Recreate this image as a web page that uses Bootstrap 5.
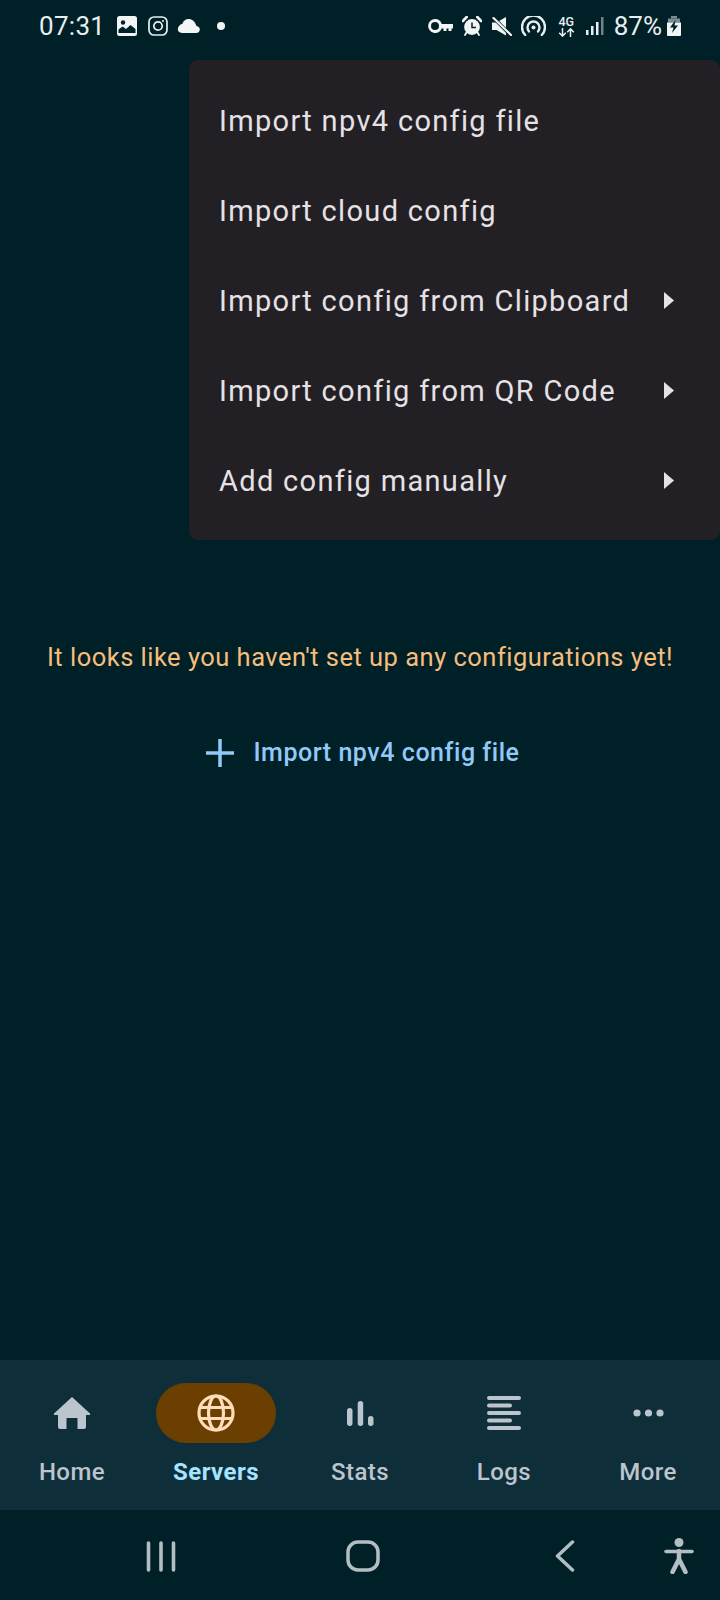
<!DOCTYPE html>
<html lang="en">
<head>
  <meta charset="UTF-8">
  <meta name="viewport" content="width=device-width, initial-scale=1.0">
  <title>Servers</title>
  <link href="https://cdn.jsdelivr.net/npm/bootstrap@5.3.0/dist/css/bootstrap.min.css" rel="stylesheet">
  <style>
    html, body {
      height: 100%;
      margin: 0;
      background-color: #002028;
      font-family: Roboto, "Liberation Sans", sans-serif;
    }

    .phone {
      width: 720px;
      height: 1600px;
      overflow: hidden;
    }

    /* Status bar */
    .status-bar {
      height: 54px;
      padding: 0 39px 2px 39px;
      color: #e8eef0;
      font-size: 26px;
    }
    .status-bar svg { display: block; flex: none; }
    .status-time { width: 78px; letter-spacing: .3px; }
    .status-pct { margin-left: 10px; line-height: 1; }
    .gap-9 { margin-left: 9px; }
    .gap-10 { margin-left: 10px; }
    .gap-11 { margin-left: 11px; }
    .gap-12 { margin-left: 12px; }
    .gap-17 { margin-left: 17px; }
    .gap-5 { margin-left: 5px; }
    .net-type { width: 17px; }
    .net-label {
      font-size: 12.5px;
      font-weight: 500;
      line-height: 11px;
      height: 11px;
    }

    /* Popup menu */
    .popup {
      position: absolute;
      top: 60px;
      left: 189px;
      width: 531px;
      padding: 15px 0;
      background-color: #222025;
      border-radius: 9px;
      color: #e6e1e5;
    }
    .popup-item {
      height: 90px;
      padding: 4px 46px 0 30px;
      font-size: 29px;
      letter-spacing: 1.32px;
    }
    .popup-item svg { margin-bottom: 3px; }

    /* Empty state */
    .empty-state { padding-top: 579px; }
    .empty-text {
      color: #f6bd7b;
      font-size: 25.5px;
      letter-spacing: .48px;
      line-height: 48px;
    }
    .empty-action {
      margin-top: 48px;
      margin-left: 6px;
      color: #93c9f8;
      font-size: 25px;
      font-weight: 500;
      letter-spacing: .55px;
      line-height: 48px;
      gap: 19px;
    }

    /* Bottom tabs */
    .tabbar {
      height: 150px;
      background-color: #0e2e39;
      color: #bcc4ce;
    }
    .tab-item { width: 144px; padding-top: 23px; }
    .tab-pill {
      width: 120px;
      height: 60px;
      border-radius: 30px;
    }
    .tab-item.is-active .tab-pill { background-color: #6b3f00; }
    .tab-item.is-active .tab-label { color: #a6e5ff; font-weight: 700; }
    .tab-label {
      margin-top: 11px;
      font-size: 24px;
      font-weight: 500;
      letter-spacing: .45px;
      line-height: 36px;
    }

    /* Android system buttons */
    .system-bar {
      height: 90px;
      padding: 2px 0 0 146px;
      color: #b3bec2;
    }
    .system-bar svg { display: block; flex: none; }
    .sys-home { margin-left: 170px; }
    .sys-back { margin-left: 175px; }
    .sys-access { margin-left: 89px; }
  </style>
</head>
<body>
  <div class="phone position-relative d-flex flex-column">

    <div class="status-bar d-flex align-items-center">
      <span class="status-time">07:31</span>
      <!-- gallery -->
      <svg width="20" height="20" viewBox="0 0 20 20"><rect width="20" height="20" rx="2.5" fill="#f2f5f6"/><circle cx="6" cy="6.5" r="2.2" fill="#002028"/><path d="M1.500 17v-3.500l4-3 3.500 2.500 4.500-4 5 4V17z" fill="#002028"/></svg>
      <!-- instagram -->
      <svg class="gap-11" width="20" height="20" viewBox="0 0 20 20" fill="none" stroke="#e8eef0" stroke-width="1.700"><rect x="1" y="1" width="18" height="18" rx="5"/><circle cx="10" cy="10" r="4.200"/><circle cx="15" cy="5" r="1" fill="#e8eef0" stroke="none"/></svg>
      <!-- cloud -->
      <svg class="gap-9" width="23" height="14" viewBox="0 0 23 14"><path d="M5 14h14c5 0 5-6.500 .5-7C18 2.500 15 0 11.500 0 8.500 0 6 2 5.300 5 .5 5.500-1.500 14 5 14z" fill="#f2f5f6"/></svg>
      <!-- notification dot -->
      <svg class="gap-17" width="8" height="8" viewBox="0 0 8 8"><circle cx="4" cy="4" r="4" fill="#f2f5f6"/></svg>

      <!-- key -->
      <svg class="ms-auto" width="25" height="14" viewBox="0 0 25 14"><path d="M7 0a7 7 0 0 1 6.700 5H25v4.500h-1.500V12h-3V9.500h-2V12h-3V9.500h-1.800A7 7 0 1 1 7 0zm0 3a4 4 0 1 0 0 8 4 4 0 0 0 0-8z" fill="#f2f5f6" fill-rule="evenodd"/></svg>
      <!-- alarm -->
      <svg class="gap-9" width="20" height="20" viewBox="0 0 20 20"><circle cx="10" cy="11" r="7.900" fill="#f2f5f6"/><path d="M10 6.500V11.500h4" stroke="#002028" stroke-width="1.500" fill="none"/><path d="M.9 5 4.700 1M19.100 5 15.300 1" stroke="#f2f5f6" stroke-width="2.600" stroke-linecap="round"/><path d="M4.500 16.500 3 19M15.500 16.500 17 19" stroke="#f2f5f6" stroke-width="1.800" stroke-linecap="round"/></svg>
      <!-- muted -->
      <svg class="gap-10" width="20" height="19" viewBox="0 0 20 19"><path d="M0 5.500h4.500L14 0v18.500L4.500 13H0z" fill="#f2f5f6"/><path d="M1 .2 19.500 19" stroke="#002028" stroke-width="3.500"/><path d="M1.500 1 19 18" stroke="#f2f5f6" stroke-width="2.200" stroke-linecap="round"/></svg>
      <!-- hotspot -->
      <svg class="gap-9" width="25" height="20" viewBox="0 0 25 20" fill="none" stroke="#e8eef0" stroke-width="2.400" stroke-linecap="round"><path d="M4.200 19A11.500 11.500 0 1 1 20.800 19"/><path d="M8 15.500a6 6 0 1 1 9 0"/><circle cx="12.500" cy="11.500" r="2" fill="#e8eef0" stroke="none"/></svg>
      <!-- 4G -->
      <div class="net-type gap-12 d-flex flex-column align-items-center">
        <span class="net-label">4G</span>
        <svg width="17" height="10" viewBox="0 0 17 10" fill="none" stroke="#e8eef0" stroke-width="1.500"><path d="M4.500 1v8M1.200 5.800l3.300 3.300 3.300-3.300M12.500 10V2M9.200 5.200l3.300-3.300 3.300 3.300"/></svg>
      </div>
      <!-- signal -->
      <svg class="gap-11" width="18" height="18" viewBox="0 0 18 18"><rect x="0" y="13" width="2.500" height="5" fill="#e8eef0"/><rect x="5" y="9" width="2.500" height="9" fill="#e8eef0"/><rect x="10" y="5" width="2.500" height="13" fill="#e8eef0"/><rect x="15" y="0" width="2.500" height="18" fill="#6f8289"/></svg>
      <span class="status-pct">87%</span>
      <!-- battery -->
      <svg class="gap-5" width="14" height="20" viewBox="0 0 14 20"><path d="M4 0h6v2.500H4z" fill="#7b8c92"/><path d="M1 2.500h12v4H1z" fill="#7b8c92"/><path d="M0 6.500h14V19a1 1 0 0 1-1 1H1a1 1 0 0 1-1-1z" fill="#f2f5f6"/><path d="M8.500 4 3 11.500h3.500L5 17l6-7.500H7.500z" fill="#002028"/></svg>
    </div>

    <div class="popup">
      <div class="popup-item d-flex align-items-center">Import npv4 config file</div>
      <div class="popup-item d-flex align-items-center">Import cloud config</div>
      <div class="popup-item d-flex align-items-center justify-content-between">Import config from Clipboard
        <svg width="10" height="17" viewBox="0 0 10 17"><path d="M0 0l10 8.500L0 17z" fill="#e6e1e5"/></svg></div>
      <div class="popup-item d-flex align-items-center justify-content-between">Import config from QR Code
        <svg width="10" height="17" viewBox="0 0 10 17"><path d="M0 0l10 8.500L0 17z" fill="#e6e1e5"/></svg></div>
      <div class="popup-item d-flex align-items-center justify-content-between">Add config manually
        <svg width="10" height="17" viewBox="0 0 10 17"><path d="M0 0l10 8.500L0 17z" fill="#e6e1e5"/></svg></div>
    </div>

    <main class="empty-state flex-grow-1 d-flex flex-column align-items-center">
      <div class="empty-text text-center">It looks like you haven't set up any configurations yet!</div>
      <div class="empty-action d-flex align-items-center">
        <svg width="28" height="28" viewBox="0 0 28 28"><path d="M14 0v28M0 14h28" stroke="#93c9f8" stroke-width="3.500"/></svg>
        <span>Import npv4 config file</span>
      </div>
    </main>

    <nav class="tabbar d-flex justify-content-center">
      <div class="tab-item d-flex flex-column align-items-center">
        <div class="tab-pill d-flex align-items-center justify-content-center">
          <svg width="36" height="32" viewBox="0 0 36 32"><path d="M18 0 36 16.500a.8.800 0 0 1-.5 1.500H32v12a2 2 0 0 1-2 2h-6.500V21h-11v11H6a2 2 0 0 1-2-2V18H.5a.8.800 0 0 1-.5-1.500z" fill="#bcc4ce"/></svg>
        </div>
        <div class="tab-label">Home</div>
      </div>
      <div class="tab-item is-active d-flex flex-column align-items-center">
        <div class="tab-pill d-flex align-items-center justify-content-center">
          <svg width="38" height="38" viewBox="0 0 38 38" fill="none" stroke="#ffdcbc" stroke-width="3.200"><circle cx="19" cy="19" r="17"/><ellipse cx="19" cy="19" rx="7.500" ry="17"/><path d="M3.500 13.500h31M3.500 24.500h31"/></svg>
        </div>
        <div class="tab-label">Servers</div>
      </div>
      <div class="tab-item d-flex flex-column align-items-center">
        <div class="tab-pill d-flex align-items-center justify-content-center">
          <svg width="27" height="25" viewBox="0 0 27 25"><rect x="0" y="7" width="5.500" height="18" rx="2.750" fill="#bcc4ce"/><rect x="10.700" y="0" width="5.500" height="25" rx="2.750" fill="#bcc4ce"/><rect x="21" y="15" width="5.500" height="10" rx="2.750" fill="#bcc4ce"/></svg>
        </div>
        <div class="tab-label">Stats</div>
      </div>
      <div class="tab-item d-flex flex-column align-items-center">
        <div class="tab-pill d-flex align-items-center justify-content-center">
          <svg width="34" height="34" viewBox="0 0 34 34" stroke="#bcc4ce" stroke-width="4" stroke-linecap="round"><path d="M2 2h30M2 9.500h21M2 17h30M2 24.500h21M2 32h30"/></svg>
        </div>
        <div class="tab-label">Logs</div>
      </div>
      <div class="tab-item d-flex flex-column align-items-center">
        <div class="tab-pill d-flex align-items-center justify-content-center">
          <svg width="31" height="8" viewBox="0 0 31 8" fill="#bcc4ce"><circle cx="4" cy="4" r="3.600"/><circle cx="15.500" cy="4" r="3.600"/><circle cx="27" cy="4" r="3.600"/></svg>
        </div>
        <div class="tab-label">More</div>
      </div>
    </nav>

    <div class="system-bar d-flex align-items-center">
      <svg width="30" height="31" viewBox="0 0 30 31" stroke="currentColor" stroke-width="3.600" stroke-linecap="round"><path d="M2.500 2v27M15 2v27M27.500 2v27"/></svg>
      <svg class="sys-home" width="34" height="32" viewBox="0 0 34 32" fill="none" stroke="currentColor" stroke-width="3.500"><rect x="2" y="2" width="30" height="28" rx="10"/></svg>
      <svg class="sys-back" width="20" height="32" viewBox="0 0 20 32" fill="none" stroke="currentColor" stroke-width="3.500" stroke-linecap="round" stroke-linejoin="round"><path d="M17.500 2 2.500 16l15 14"/></svg>
      <svg class="sys-access" width="30" height="36" viewBox="0 0 30 36"><circle cx="15" cy="4.500" r="4.500" fill="currentColor"/><path d="M2 13.500h26" stroke="currentColor" stroke-width="3.500" stroke-linecap="round"/><path d="M15 13v9M15 21 8.500 34M15 21l6.500 13" stroke="currentColor" stroke-width="4.500" stroke-linecap="round" fill="none"/></svg>
    </div>
  </div>

  <script src="https://cdn.jsdelivr.net/npm/bootstrap@5.3.0/dist/js/bootstrap.bundle.min.js"></script>
</body>
</html>
